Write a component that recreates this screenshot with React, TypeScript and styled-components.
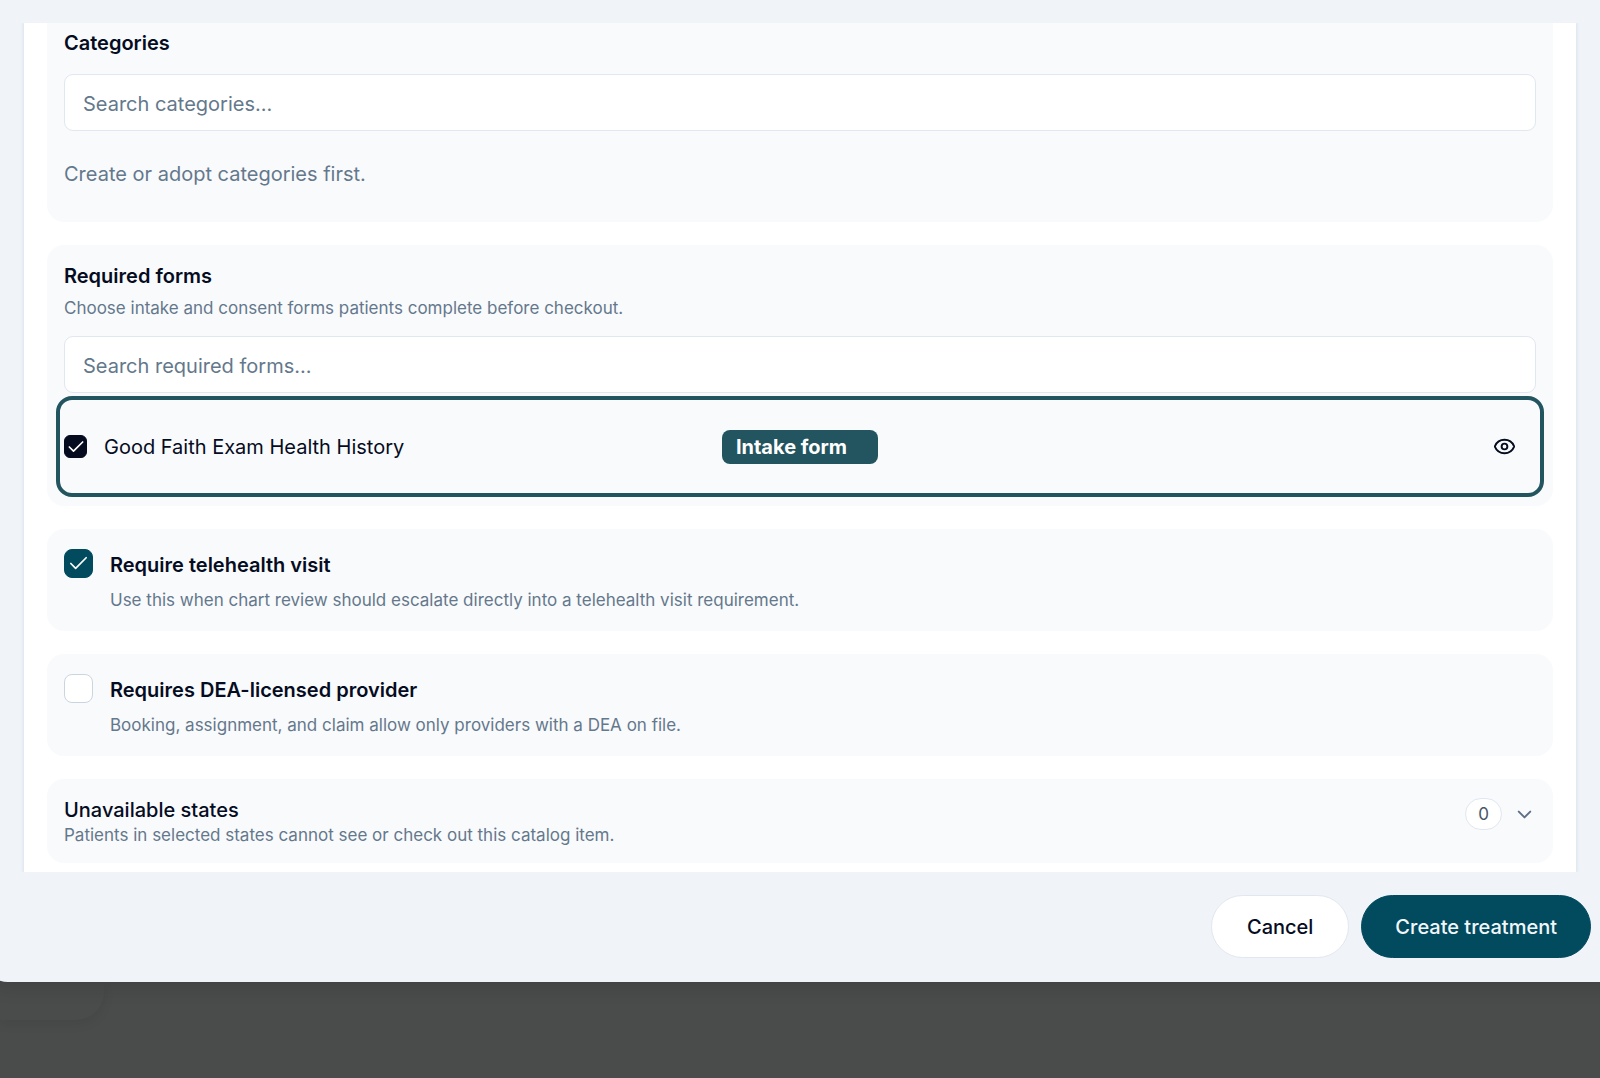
import React, { useState } from "react";
import styled, { createGlobalStyle } from "styled-components";
import { Check, ChevronDown, Eye } from "lucide-react";

const color = {
  backdrop: "#4a4c4b",
  surface: "#f0f4f9",
  panel: "#ffffff",
  card: "#f9fafc",
  border: "#e1e7f0",
  ink: "#050c1f",
  muted: "#64788c",
  brand: "#024b5e",
  accent: "#235560",
};

const GlobalStyle = createGlobalStyle`
  *, *::before, *::after { box-sizing: border-box; }
  body { margin: 0; background: ${color.backdrop}; }
  body, button, input { font-family: Inter, "Liberation Sans", sans-serif; }
`;

const Page = styled.div`
  min-height: 100vh;
  overflow: hidden;
  display: flex;
  flex-direction: column;
  background: ${color.backdrop};
  color: ${color.ink};
`;

const Dialog = styled.section`
  position: relative;
  margin: 0 -16px;
  padding: 23px 16px 24px;
  border-radius: 0 0 0 24px;
  background: ${color.surface};
  box-shadow: 0 4px 20px rgba(0, 0, 0, 0.14);
`;

const ScrollArea = styled.div`
  overflow: hidden;
  padding: 0 24px;
`;

const Panel = styled.div`
  display: flex;
  flex-direction: column;
  gap: 23px;
  padding: 0 23px 9px;
  background: ${color.panel};
  box-shadow: 0 0 3px 1px #dbe2ec;
`;

const Card = styled.section<{ $continued?: boolean }>`
  padding: ${(p) => (p.$continued ? "6px 17px 34px" : "17px")};
  border-radius: ${(p) => (p.$continued ? "0 0 17px 17px" : "17px")};
  background: ${color.card};
`;

const FormsCard = styled(Card)`
  padding-bottom: 9px;
`;

const Title = styled.label<{ $weight?: number }>`
  display: block;
  font-size: 20px;
  line-height: 28px;
  font-weight: ${(p) => p.$weight ?? 600};
`;

const Hint = styled.p<{ $gap?: number }>`
  margin: ${(p) => p.$gap ?? 0}px 0 0;
  font-size: 17px;
  line-height: 22px;
  color: ${color.muted};
`;

const EmptyText = styled.p`
  margin: 29px 0 0;
  font-size: 20px;
  line-height: 28px;
  color: ${color.muted};
`;

const SearchInput = styled.input`
  display: block;
  width: 100%;
  height: 57px;
  margin-top: 17px;
  padding: 2px 18px 0;
  border: 1px solid ${color.border};
  border-radius: 9px;
  background: ${color.panel};
  font-size: 20px;
  color: ${color.ink};
  outline: none;
  &::placeholder { color: ${color.muted}; opacity: 1; }
`;

const FormRow = styled.div`
  display: grid;
  grid-template-columns: 1fr auto 1fr;
  align-items: center;
  height: 101px;
  margin: 3px -8px 0;
  padding: 0 4px;
  border: 4px solid ${color.accent};
  border-radius: 16px;
`;

const FormChoice = styled.div`
  display: flex;
  align-items: center;
  gap: 17px;
`;

const TickShell = styled.span`
  display: grid;
  place-items: center;
  align-self: flex-start;
  flex: none;
  > * { grid-area: 1 / 1; }
  > svg { pointer-events: none; color: #fff; }
  ${FormChoice} & { align-self: center; }
`;

const TickInput = styled.input<{ $size: number; $fill: string }>`
  appearance: none;
  width: ${(p) => p.$size}px;
  height: ${(p) => p.$size}px;
  margin: 0;
  border: 1px solid #cbd5e1;
  border-radius: ${(p) => (p.$size > 24 ? 8 : 6)}px;
  background: ${color.panel};
  &:checked {
    border-color: ${(p) => p.$fill};
    background: ${(p) => p.$fill};
  }
`;

const Badge = styled.span`
  padding: 3px 31px 3px 14px;
  border-radius: 8px;
  background: ${color.accent};
  color: #fff;
  font-size: 20px;
  line-height: 28px;
  font-weight: 700;
`;

const IconButton = styled.button`
  display: grid;
  place-items: center;
  justify-self: end;
  padding: 0 20px;
  border: 0;
  background: transparent;
  color: inherit;
`;

const OptionCard = styled(Card)`
  display: flex;
  gap: 17px;
  padding: 20px 17px;
`;

const OptionText = styled.div`
  padding-top: 2px;
`;

const StatesCard = styled(Card)`
  display: flex;
  justify-content: space-between;
  align-items: flex-start;
`;

const StatesToggle = styled.button`
  display: flex;
  align-items: center;
  gap: 11px;
  margin: 2px 0 0;
  padding: 0;
  border: 0;
  background: transparent;
  color: #5c6f88;
`;

const Count = styled.span`
  padding: 3px 12px;
  border: 1px solid ${color.border};
  border-radius: 16px;
  background: ${color.panel};
  color: #475569;
  font-size: 17px;
  line-height: 24px;
`;

const Footer = styled.footer`
  display: flex;
  justify-content: flex-end;
  gap: 12px;
  padding: 23px 9px 0;
`;

const Action = styled.button<{ $primary?: boolean }>`
  height: 63px;
  padding: 0 ${(p) => (p.$primary ? 33 : 35)}px;
  border: 1px solid ${(p) => (p.$primary ? color.brand : color.border)};
  border-radius: 32px;
  background: ${(p) => (p.$primary ? color.brand : color.panel)};
  color: ${(p) => (p.$primary ? "#f3f7fb" : color.ink)};
  font-size: 20px;
  line-height: 28px;
  font-weight: 500;
`;

const DimmedCard = styled.div`
  width: 104px;
  height: 38px;
  border-radius: 0 0 28px 0;
  box-shadow: 0 4px 12px rgba(0, 0, 0, 0.07);
`;

type TickProps = {
  id: string;
  size: number;
  fill: string;
  checked: boolean;
  onChange: (value: boolean) => void;
};

function Tick({ id, size, fill, checked, onChange }: TickProps) {
  return (
    <TickShell>
      <TickInput
        id={id}
        type="checkbox"
        $size={size}
        $fill={fill}
        checked={checked}
        onChange={(e) => onChange(e.target.checked)}
      />
      {checked && <Check size={size > 24 ? 23 : 20} strokeWidth={size > 24 ? 1.75 : 2} />}
    </TickShell>
  );
}

type OptionProps = { id: string; title: string; hint: string; initial: boolean };

function Option({ id, title, hint, initial }: OptionProps) {
  const [checked, setChecked] = useState(initial);
  return (
    <OptionCard>
      <Tick id={id} size={29} fill={color.brand} checked={checked} onChange={setChecked} />
      <OptionText>
        <Title htmlFor={id}>{title}</Title>
        <Hint $gap={10}>{hint}</Hint>
      </OptionText>
    </OptionCard>
  );
}

export default function App() {
  const [intake, setIntake] = useState(true);
  return (
    <Page>
      <GlobalStyle />
      <Dialog role="dialog" aria-label="Create treatment">
        <ScrollArea>
          <Panel>
            <Card $continued>
              <Title htmlFor="categories">Categories</Title>
              <SearchInput id="categories" type="text" placeholder="Search categories..." />
              <EmptyText>Create or adopt categories first.</EmptyText>
            </Card>

            <FormsCard>
              <Title htmlFor="forms">Required forms</Title>
              <Hint $gap={7}>Choose intake and consent forms patients complete before checkout.</Hint>
              <SearchInput id="forms" type="text" placeholder="Search required forms..." />
              <FormRow>
                <FormChoice>
                  <Tick id="health-history" size={23} fill={color.ink} checked={intake} onChange={setIntake} />
                  <Title htmlFor="health-history" $weight={400}>Good Faith Exam Health History</Title>
                </FormChoice>
                <Badge>Intake form</Badge>
                <IconButton type="button" aria-label="Preview form">
                  <Eye size={23} />
                </IconButton>
              </FormRow>
            </FormsCard>

            <Option
              id="telehealth"
              title="Require telehealth visit"
              hint="Use this when chart review should escalate directly into a telehealth visit requirement."
              initial
            />
            <Option
              id="dea"
              title="Requires DEA-licensed provider"
              hint="Booking, assignment, and claim allow only providers with a DEA on file."
              initial={false}
            />

            <StatesCard>
              <div>
                <Title as="div" $weight={500}>Unavailable states</Title>
                <Hint>Patients in selected states cannot see or check out this catalog item.</Hint>
              </div>
              <StatesToggle type="button" aria-label="Show unavailable states">
                <Count>0</Count>
                <ChevronDown size={23} />
              </StatesToggle>
            </StatesCard>
          </Panel>
        </ScrollArea>
        <Footer>
          <Action type="button">Cancel</Action>
          <Action type="button" $primary>Create treatment</Action>
        </Footer>
      </Dialog>
      <DimmedCard />
    </Page>
  );
}
